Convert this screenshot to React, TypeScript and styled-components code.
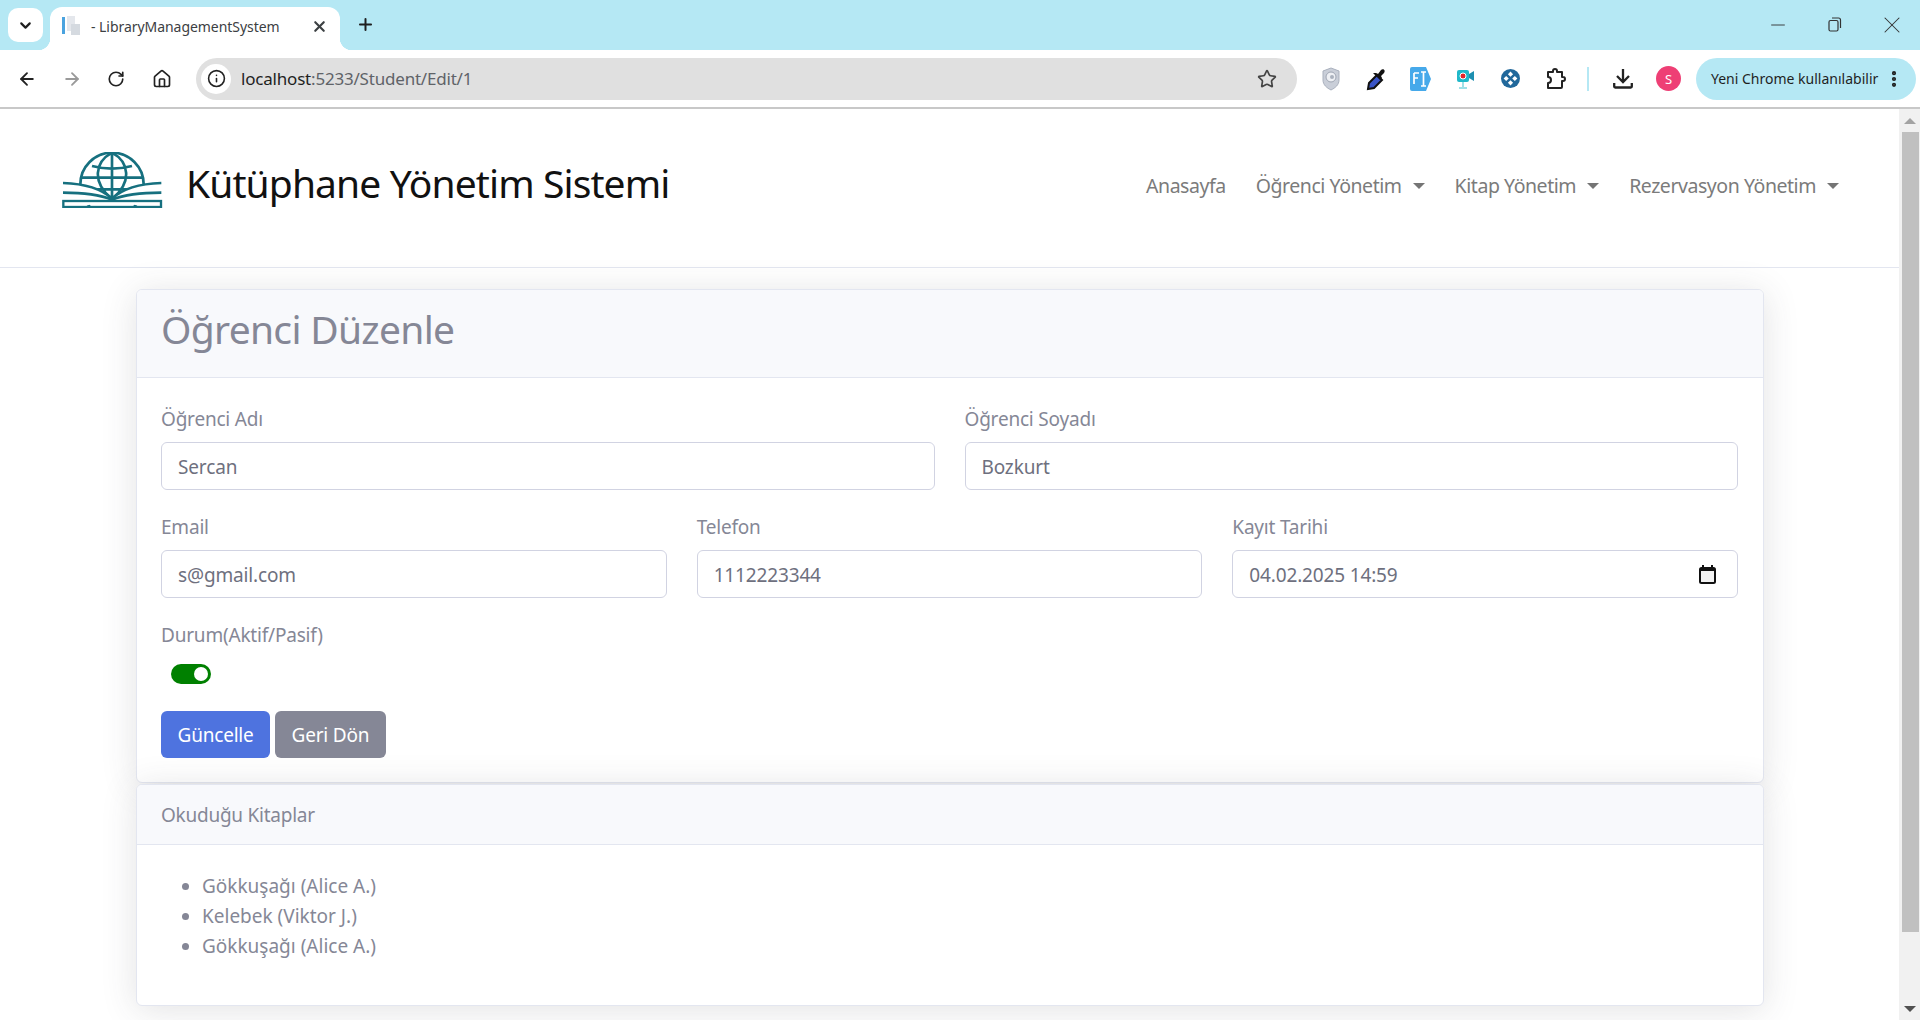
import React from 'react';
import styled, { createGlobalStyle } from 'styled-components';
import { ArrowLeft, ArrowRight, RotateCw, Home, Info, Star, X, Plus, ChevronDown, Minus, EllipsisVertical } from 'lucide-react';

const Global = createGlobalStyle`
  html, body { margin: 0; padding: 0; height: 1020px; overflow: hidden; background: #fff; }
  * { box-sizing: border-box; }
  body { font-family: "Noto Sans", "Open Sans", sans-serif; }
`;

const Frame = styled.div`display:flex;flex-direction:column;width:1920px;height:1020px;overflow:hidden;`;
const TabStrip = styled.div`height:50px;background:#b5e8f4;display:flex;align-items:flex-start;padding:8px 0 0 8px;flex:none;`;
const TabMenu = styled.div`width:35px;height:34px;border-radius:10px;background:#fff;display:flex;align-items:center;justify-content:center;color:#1f1f1f;margin-right:7px;`;
const Tab = styled.div`
  position:relative;width:290px;height:43px;margin-top:-1px;background:#fff;border-radius:12px 12px 0 0;display:flex;align-items:center;padding:0 12px 5px 12px;font-size:14px;color:#3c4043;
  &::before,&::after{content:"";position:absolute;bottom:0;width:12px;height:12px;}
  &::before{left:-12px;background:radial-gradient(circle at 0 0,transparent 12px,#fff 12.500px);}
  &::after{right:-12px;background:radial-gradient(circle at 100% 0,transparent 12px,#fff 12.500px);}
`;
const TabTitle = styled.span`flex:1;margin-left:11px;white-space:nowrap;letter-spacing:-.05px;`;
const NewTab = styled.div`margin:7px 0 0 16px;color:#1f1f1f;display:flex;`;
const WindowControls = styled.div`margin-left:auto;display:flex;height:33px;color:#333;`;
const WindowButton = styled.div`width:57px;display:flex;align-items:center;justify-content:center;`;
const Toolbar = styled.div`height:59px;flex:none;background:#fff;border-bottom:2px solid #c8c8c8;border-radius:10px 10px 0 0;display:flex;align-items:center;padding:0 5px 0 17px;position:relative;z-index:1;`;
const NavIcon = styled.div<{ $muted?: boolean }>`width:45px;display:flex;flex:none;color:${p => (p.$muted ? '#9a9a9a' : '#222')};`;
const Omnibox = styled.div`flex:none;width:1101px;height:42px;margin-left:-1px;border-radius:21px;background:#e0e0e0;display:flex;align-items:center;padding:0 20px 0 5px;font-size:17px;`;
const InfoBadge = styled.div`width:30px;height:30px;border-radius:50%;background:#fff;display:flex;align-items:center;justify-content:center;color:#222;margin-right:10px;`;
const UrlHost = styled.span`color:#1f1f1f;letter-spacing:-.2px;`;
const UrlPath = styled.span`color:#5f6368;letter-spacing:-.2px;flex:1;`;
const Extensions = styled.div`display:flex;align-items:center;margin-left:11px;flex:none;`;
const ExtSlot = styled.div`width:45px;height:30px;display:flex;align-items:center;justify-content:center;color:#222;`;
const Divider = styled.div`width:2px;height:24px;background:#b5e8f4;margin:0 11px 0 9px;`;
const Avatar = styled.div`width:25px;height:25px;border-radius:50%;background:#ee3f75;color:#fff;display:flex;align-items:center;justify-content:center;font-size:13px;margin:0 15px 0 11px;`;
const UpdatePill = styled.div`flex:none;width:220px;height:42px;border-radius:21px;background:#b5e8f4;display:flex;align-items:center;justify-content:space-between;padding:0 12px 0 15px;font-size:14px;color:#1f1f1f;white-space:nowrap;`;

const Viewport = styled.div`flex:1;display:flex;min-height:0;`;
const Page = styled.div`flex:1;min-width:0;overflow:hidden;`;
const Scrollbar = styled.div`width:21px;flex:none;background:#f1f1f1;display:flex;flex-direction:column;align-items:center;padding-left:1px;`;
const ScrollArrow = styled.div<{ $down?: boolean }>`height:23px;flex:none;display:flex;align-items:center;justify-content:center;&::after{content:"";border-left:6px solid transparent;border-right:6px solid transparent;${p => (p.$down ? 'border-top:6px solid #505050;' : 'border-bottom:6px solid #a3a3a3;')}}`;
const ScrollThumb = styled.div`width:17px;height:800px;background:#c0c0c0;flex:none;margin-bottom:auto;`;

const Header = styled.header`height:159px;border-bottom:1px solid #e3e6f0;background:#fff;display:flex;align-items:center;padding:0 60px 0 62px;`;
const Brand = styled.div`display:flex;align-items:center;gap:23px;font-size:39px;color:#111;margin-top:-12px;`;
const BrandTitle = styled.span`white-space:nowrap;letter-spacing:-.9px;`;
const LogoMark = styled.svg`flex:none;margin-bottom:5px;`;
const Nav = styled.nav`margin-left:auto;display:flex;gap:30px;align-items:center;margin-top:-5px;`;
const NavLink = styled.a`font-size:19.500px;color:#7b7b7b;letter-spacing:-.45px;white-space:nowrap;display:flex;align-items:center;`;
const Caret = styled.span`display:inline-block;margin-left:11px;border-top:6px solid #757575;border-left:6px solid transparent;border-right:6px solid transparent;`;

const Main = styled.main`padding:21px 0 0 136px;width:1764px;`;
const Card = styled.section<{ $h: number }>`height:${p => p.$h}px;background:#fff;border:1px solid #e3e6f0;border-radius:6px;box-shadow:0 4px 35px rgba(58,59,69,.15);margin-bottom:1px;overflow:hidden;`;
const CardHeadLarge = styled.div`height:88px;background:#f8f9fc;border-bottom:1px solid #e3e6f0;display:flex;align-items:center;padding:0 24px 10px;font-size:39px;color:#858796;letter-spacing:-.7px;`;
const CardHeadSmall = styled.div`height:60px;background:#f8f9fc;border-bottom:1px solid #e3e6f0;display:flex;align-items:center;padding:0 24px;font-size:19px;color:#858796;letter-spacing:-.25px;`;
const Form = styled.div`padding:26px 25px 0 24px;display:flex;flex-direction:column;`;
const Row = styled.div<{ $cols: number }>`display:grid;grid-template-columns:repeat(${p => p.$cols},1fr);gap:30px;margin-bottom:22px;`;
const Field = styled.div`display:flex;flex-direction:column;`;
const Label = styled.label`font-size:19px;line-height:30px;color:#858796;margin-bottom:8px;letter-spacing:-.2px;`;
const Input = styled.div`height:48px;border:1px solid #d1d3e2;border-radius:6px;padding:2px 15px 0 16px;display:flex;align-items:center;justify-content:space-between;font-size:19px;color:#6e707e;letter-spacing:-.15px;`;
const Toggle = styled.div`width:40px;height:20px;border-radius:10px;background:#008000;margin:6px 0 27px 10px;display:flex;align-items:center;justify-content:flex-end;padding-right:3px;&::after{content:"";width:14px;height:14px;border-radius:50%;background:#fff;}`;
const Buttons = styled.div`display:flex;gap:5px;`;
const Button = styled.div<{ $secondary?: boolean }>`height:47px;padding:1px 16.500px 0;border-radius:6px;display:flex;align-items:center;color:#fff;font-size:19px;letter-spacing:-.2px;background:${p => (p.$secondary ? '#858796' : '#4e73df')};`;
const BookList = styled.ul`margin:0;padding:26px 24px 0 65px;font-size:19px;line-height:30px;color:#858796;`;
const CalendarIcon = styled.svg`margin-right:6px;margin-top:-2px;flex:none;`;

const Logo = () => (
  <LogoMark width="101" height="56" viewBox="22 20 303 168" fill="none" stroke="#16707f" strokeWidth="8">
    <circle cx="172" cy="117" r="95" />
    <path d="M172 22C120 50 112 110 169 158M172 22c52 28 60 88 3 136M172 22v136M112 62q60 16 120 0M82 97h180M100 132h144" />
    <path d="M25 113C90 115 140 130 172 160L25 200zM320 113c-65 2-115 17-148 47l148 40z" fill="#fff" stroke="none" />
    <path d="M25 113C90 115 140 130 172 160 204 130 254 115 320 113" />
    <path d="M25 142C90 142 140 150 172 163 204 150 254 142 320 142" />
    <rect x="26" y="167" width="293" height="18" strokeWidth="7" />
  </LogoMark>
);

const Shield = () => (
  <svg width="18" height="24" viewBox="0 0 18 24"><path d="M9 1l8 3v9c0 5-4 8-8 10-4-2-8-5-8-10V4z" fill="#c9ced8" stroke="#a9b0bd" /><circle cx="9" cy="10" r="5" fill="#eef0f4" stroke="#9fa6b3" /><circle cx="10" cy="10" r="2" fill="#aab1bd" /></svg>
);
const Dropper = () => (
  <svg width="20" height="24" viewBox="0 0 20 24"><path d="M2 22l1-6L11 8l5 5-8 8z" fill="#3a55c8" stroke="#111" strokeWidth="2" /><path d="M10 6l2 1 3-4c2-2 5 0 3 3l-3 3 1 2-2 2-7-7z" fill="#111" /></svg>
);
const FontIcon = () => (
  <svg width="21" height="24" viewBox="0 0 21 24"><path d="M2 0h14l5 12-5 12H2a2 2 0 0 1-2-2V2a2 2 0 0 1 2-2z" fill="#46a9ea" /><path d="M4 6h5M4 6v11M4 11h4M11 5h5M11 19h5M13.500 5v14" stroke="#fff" strokeWidth="1.700" fill="none" /></svg>
);
const Camera = () => (
  <svg width="17" height="20" viewBox="0 0 17 20"><rect x="0" y="1" width="12" height="12" rx="2" fill="#1fb8c9" /><circle cx="6" cy="7" r="3" fill="#e6242a" stroke="#fff" /><path d="M12 5l5-3v10l-5-3z" fill="#1d8fb0" /><path d="M6 13v5M2 19h8" stroke="#7fd6e0" strokeWidth="1.500" /></svg>
);
const Pad = () => (
  <svg width="19" height="19" viewBox="0 0 22 22"><circle cx="11" cy="11" r="11" fill="#21689b" /><path d="M11 3l3 3-3 3-3-3zM11 13l3 3-3 3-3-3zM3 11l3-3 3 3-3 3zM13 11l3-3 3 3-3 3z" fill="#fff" /></svg>
);
const ExtensionPuzzle = () => (
  <svg width="20" height="21" viewBox="0 0 20 21" fill="none" stroke="#222" strokeWidth="2" strokeLinejoin="round"><path d="M2 4h5V3a2 2 0 0 1 4 0v1h5v5h1a2 2 0 0 1 0 4h-1v6a1 1 0 0 1-1 1H2v-5a2.500 2.500 0 0 0 0-6V4z" /></svg>
);
const DownloadGlyph = () => (
  <svg width="20" height="21" viewBox="0 0 20 21" fill="none" stroke="#222" strokeWidth="2.300"><path d="M10 1v12M4 8l6 6 6-6" /><path d="M1.200 15v3.500a1 1 0 0 0 1 1h15.600a1 1 0 0 0 1-1V15" /></svg>
);
const Calendar = () => (
  <CalendarIcon width="17" height="19" viewBox="0 0 17 19" fill="none"><rect x="1" y="3" width="15" height="15" rx="1.500" fill="#f2f2f2" stroke="#111" strokeWidth="2" /><path d="M1 3h15v3H1z" fill="#111" /><path d="M4 0v3M13 0v3" stroke="#111" strokeWidth="2" /></CalendarIcon>
);
const PageIcon = () => (
  <svg width="18" height="20" viewBox="0 0 18 20"><rect x="0" y="1" width="3" height="17" fill="#4aa3df" /><rect x="5" y="0" width="8" height="15" fill="#e4e7ec" /><rect x="9" y="8" width="9" height="11" fill="#d5dae0" /></svg>
);
const Restore = () => (
  <svg width="14" height="15" viewBox="0 0 14 15" fill="none" stroke="#333" strokeWidth="1.200"><rect x="1" y="3.500" width="9" height="10.500" rx="1.500" /><path d="M4 1h6.500a2 2 0 0 1 2 2v8" /></svg>
);

export default function App() {
  return (
    <Frame>
      <Global />
      <TabStrip>
        <TabMenu><ChevronDown size={17} strokeWidth={3} /></TabMenu>
        <Tab>
          <PageIcon />
          <TabTitle>- LibraryManagementSystem</TabTitle>
          <X size={17} strokeWidth={3} />
        </Tab>
        <NewTab><Plus size={19} strokeWidth={2.5} /></NewTab>
        <WindowControls>
          <WindowButton><Minus size={22} strokeWidth={1} /></WindowButton>
          <WindowButton><Restore /></WindowButton>
          <WindowButton><X size={28} strokeWidth={0.9} /></WindowButton>
        </WindowControls>
      </TabStrip>
      <Toolbar>
        <NavIcon><ArrowLeft size={20} strokeWidth={2.2} /></NavIcon>
        <NavIcon $muted><ArrowRight size={20} strokeWidth={2.2} /></NavIcon>
        <NavIcon><RotateCw size={18} strokeWidth={2.2} /></NavIcon>
        <NavIcon><Home size={20} strokeWidth={2} /></NavIcon>
        <Omnibox>
          <InfoBadge><Info size={19} strokeWidth={2} /></InfoBadge>
          <UrlHost>localhost</UrlHost>
          <UrlPath>:5233/Student/Edit/1</UrlPath>
          <Star size={20} strokeWidth={2} color="#444" />
        </Omnibox>
        <Extensions>
          <ExtSlot><Shield /></ExtSlot>
          <ExtSlot><Dropper /></ExtSlot>
          <ExtSlot><FontIcon /></ExtSlot>
          <ExtSlot><Camera /></ExtSlot>
          <ExtSlot><Pad /></ExtSlot>
          <ExtSlot><ExtensionPuzzle /></ExtSlot>
          <Divider />
          <ExtSlot><DownloadGlyph /></ExtSlot>
          <Avatar>S</Avatar>
        </Extensions>
        <UpdatePill>Yeni Chrome kullanılabilir<EllipsisVertical size={20} strokeWidth={3} /></UpdatePill>
      </Toolbar>
      <Viewport>
        <Page>
          <Header>
            <Brand><Logo /><BrandTitle>Kütüphane Yönetim Sistemi</BrandTitle></Brand>
            <Nav>
              <NavLink>Anasayfa</NavLink>
              <NavLink>Öğrenci Yönetim<Caret /></NavLink>
              <NavLink>Kitap Yönetim<Caret /></NavLink>
              <NavLink>Rezervasyon Yönetim<Caret /></NavLink>
            </Nav>
          </Header>
          <Main>
            <Card $h={494}>
              <CardHeadLarge>Öğrenci Düzenle</CardHeadLarge>
              <Form>
                <Row $cols={2}>
                  <Field><Label>Öğrenci Adı</Label><Input>Sercan</Input></Field>
                  <Field><Label>Öğrenci Soyadı</Label><Input>Bozkurt</Input></Field>
                </Row>
                <Row $cols={3}>
                  <Field><Label>Email</Label><Input>s@gmail.com</Input></Field>
                  <Field><Label>Telefon</Label><Input>1112223344</Input></Field>
                  <Field><Label>Kayıt Tarihi</Label><Input>04.02.2025 14:59<Calendar /></Input></Field>
                </Row>
                <Label>Durum(Aktif/Pasif)</Label>
                <Toggle />
                <Buttons>
                  <Button>Güncelle</Button>
                  <Button $secondary>Geri Dön</Button>
                </Buttons>
              </Form>
            </Card>
            <Card $h={222}>
              <CardHeadSmall>Okuduğu Kitaplar</CardHeadSmall>
              <BookList>
                <li>Gökkuşağı (Alice A.)</li>
                <li>Kelebek (Viktor J.)</li>
                <li>Gökkuşağı (Alice A.)</li>
              </BookList>
            </Card>
          </Main>
        </Page>
        <Scrollbar>
          <ScrollArrow />
          <ScrollThumb />
          <ScrollArrow $down />
        </Scrollbar>
      </Viewport>
    </Frame>
  );
}
